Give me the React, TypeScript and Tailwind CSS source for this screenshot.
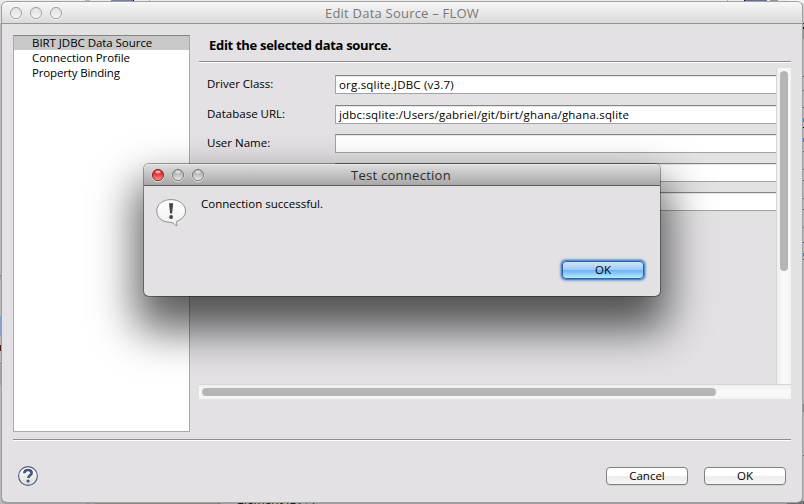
import React from "react";

const font = "font-['Open_Sans','Noto_Sans',sans-serif]";

function Light({ red = false, pale = false }: { red?: boolean; pale?: boolean }) {
  const id = red ? "light-red" : pale ? "light-pale" : "light-gray";
  return (
    <svg width="14" height="14" viewBox="0 0 14 14">
      <defs>
        <linearGradient id={id} x1="0" y1="0" x2="0" y2="1">
          <stop offset="0" stopColor={red ? "#b8222b" : pale ? "#d4d4d4" : "#9c9c9c"} />
          <stop offset="0.5" stopColor={red ? "#e9413f" : pale ? "#e9e9e9" : "#c2c2c2"} />
          <stop offset="1" stopColor={red ? "#ff9d93" : pale ? "#f8f8f8" : "#ececec"} />
        </linearGradient>
      </defs>
      <circle cx="7" cy="7.6" r="6" fill="none" stroke="#fff" strokeOpacity="0.6" />
      <circle cx="7" cy="7" r="5.6" fill={`url(#${id})`} stroke={red ? "#8d2a2e" : pale ? "#a2a2a2" : "#7c7c7c"} strokeWidth="1" />
      <ellipse cx="7" cy="4" rx="2.6" ry="1.4" fill="#fff" fillOpacity={pale ? 0.35 : 0.6} />
    </svg>
  );
}

function Field({ label, value, gap }: { label: string; value: string; gap: string }) {
  return (
    <div className={`flex h-[19px] items-center ${gap}`}>
      <span className="w-[128px] shrink-0 pb-[2px] whitespace-nowrap">{label}</span>
      <div className="flex h-[19px] flex-1 items-center overflow-hidden border border-r-0 border-[#a3a3a3] border-t-[#858585] bg-white pb-[1px] pl-[3px] shadow-[inset_0_1px_0_#e6e6e6]">
        <span className="leading-[15px] tracking-[0.19px] whitespace-nowrap">{value}</span>
      </div>
    </div>
  );
}

function PushButton({ children }: { children: string }) {
  return (
    <button className="flex h-[18px] w-[82px] items-center justify-center rounded-[4px] border border-[#7f7f7f] bg-linear-to-b from-white from-45% via-[#ededed] via-55% to-[#f6f6f6] shadow-[0_1px_0_#d0d0d0]">
      {children}
    </button>
  );
}

function Backdrop() {
  return (
    <div className="flex h-[504px] w-[804px] flex-col bg-[#c4c4c6]">
      <div className="flex h-[3px] shrink-0 bg-[#ececec]">
        <div className="ml-[85px] w-[5px] bg-[#b9b9b9]" />
        <div className="ml-[21px] w-[22px] bg-[#777fa8]" />
        <div className="w-px bg-black" />
        <div className="ml-[15px] w-px bg-[#8eb8d8]" />
        <div className="ml-[577px] w-px bg-[#8eb8d8]" />
        <div className="ml-[16px] w-px bg-black" />
        <div className="w-[22px] bg-[#626d9b]" />
        <div className="ml-[3px] w-[8px] bg-[#999]" />
        <div className="ml-[9px] flex-1 bg-[#f7f7f7]" />
      </div>
      <div className="flex h-[498px] shrink-0 justify-between">
        <div className="flex w-[3px] flex-col bg-[#bdbdc1]">
          <div className="h-[20px] bg-[#e4e4e4]" />
          <div className="mt-[252px] h-px bg-[#777]" />
          <div className="h-[4px] bg-[#a6a6aa]" />
          <div className="mt-[36px] h-[20px] bg-[#8ea6cc]" />
          <div className="mt-[9px] h-[6px] bg-[#482010]" />
          <div className="mt-[12px] h-px bg-[#777]" />
          <div className="mt-px h-[20px] bg-[#a5a5a5]" />
        </div>
        <div className="flex w-[3px] flex-col bg-[#bdbdc1]">
          <div className="h-[20px] bg-[#d0d0d0]" />
          <div className="h-px bg-[#333]" />
          <div className="mt-[3px] h-[2px] bg-[#111]" />
          <div className="h-[10px] bg-[#929292]" />
          <div className="mt-[37px] h-px bg-[#666]" />
          <div className="mt-[13px] h-px bg-[#666]" />
          <div className="mt-[16px] h-px bg-[#666]" />
          <div className="mt-[10px] h-[4px] bg-[#4c82b4]" />
          <div className="mt-[5px] h-px bg-black" />
          <div className="mt-[10px] h-[4px] bg-[#4c82b4]" />
          <div className="mt-[9px] h-px bg-[#555]" />
          <div className="mt-[17px] h-px bg-[#777]" />
          <div className="mt-[10px] h-px bg-[#555]" />
          <div className="mt-[17px] h-px bg-[#777]" />
          <div className="mt-[10px] h-px bg-[#555]" />
          <div className="mt-[17px] h-px bg-[#777]" />
          <div className="mt-[14px] h-px bg-[#555]" />
          <div className="mt-[10px] h-[3px] bg-[#4c82b4]" />
          <div className="mt-[3px] h-px bg-[#555]" />
          <div className="mt-[144px] h-[8px] bg-[#8b8b8b]" />
          <div className="mt-[43px] h-px bg-[#555]" />
        </div>
      </div>
      <div className="flex h-[3px] shrink-0 overflow-hidden bg-[#b9b9bb]">
        <div className="ml-[86px] w-[4px] bg-[#a19fa4]" />
        <div className="ml-[5px] w-[124px] bg-[#9b9b91]" />
        <div className="w-px bg-[#666]" />
        <span className="-mt-[9px] ml-[17px] w-[69px] text-[12px] leading-[15px] text-black">Element ID:</span>
        <div className="w-px bg-[#666]" />
        <span className="-mt-[9px] ml-[4px] text-[12px] leading-[15px] text-black">7</span>
        <div className="ml-auto w-[17px] bg-[#777]" />
      </div>
    </div>
  );
}

function DataSourceWindow() {
  return (
    <section className="absolute top-[2px] left-[2px] flex h-[500px] w-[800px] flex-col overflow-hidden rounded-[5px] bg-[#e3e1e4] shadow-[0_0_0_1px_#a0a0a2,0_1px_2px_#555]">
      <header className="flex h-[22px] shrink-0 items-center border-b border-[#949494] bg-linear-to-b from-[#f7f7f7] to-[#dadada] pl-[7px]">
        <div className="flex w-[54px] gap-[6px]">
          <Light pale /><Light pale /><Light pale />
        </div>
        <h1 className="ml-[262px] text-[13px] leading-[18px] tracking-[0.22px] whitespace-nowrap text-[#777]">Edit Data Source – FLOW</h1>
      </header>
      <div className="flex h-[408px] shrink-0 pt-[11px] pr-[11px] pl-[11px]">
        <nav className="h-[397px] w-[177px] shrink-0 border border-[#aaa] border-t-[#858585] bg-white">
          <div className="h-[14px] bg-[#c8c8c8] pl-[18px] leading-[14px] tracking-[-0.05px]">BIRT JDBC Data Source</div>
          <div className="h-[15px] pl-[18px] leading-[16px] tracking-[-0.05px]">Connection Profile</div>
          <div className="h-[15px] pl-[18px] leading-[16px] tracking-[-0.15px]">Property Binding</div>
        </nav>
        <main className="ml-[9px] flex w-[592px] flex-col">
          <h2 className="h-[27px] shrink-0 border-b border-[#8d8b8e] pl-[10px] text-[13px] leading-[21px] font-bold tracking-[-0.3px] whitespace-nowrap">Edit the selected data source.</h2>
          <div className="h-px shrink-0 bg-white" />
          <div className="mt-[5px] flex h-[316px] shrink-0">
            <div className="flex w-[577px] flex-col pt-[7px] pl-[8px]">
              <Field label="Driver Class:" value="org.sqlite.JDBC (v3.7)" gap="mt-0" />
              <Field label="Database URL:" value="jdbc:sqlite:/Users/gabriel/git/birt/ghana/ghana.sqlite" gap="mt-[11px]" />
              <Field label="User Name:" value="" gap="mt-[10px]" />
              <Field label="Password:" value="" gap="mt-[10px]" />
              <Field label="JNDI URL:" value="" gap="mt-[10px]" />
            </div>
            <div className="w-[15px] border-l border-[#d6d6d6] bg-linear-to-r from-[#efefef] via-[#fafafa] to-[#f4f4f4] pt-[3px] pl-[3px]">
              <div className="h-[200px] w-[8px] rounded-full bg-[#b5b5b5]" />
            </div>
          </div>
          <div className="h-[15px] shrink-0 border-t border-[#d6d6d6] bg-linear-to-b from-[#efefef] via-[#fafafa] to-[#f4f4f4] pt-[3px] pl-[3px]">
            <div className="h-[8px] w-[514px] rounded-full bg-[#b5b5b5]" />
          </div>
        </main>
      </div>
      <footer className="flex flex-1 flex-col px-[11px] pt-[7px]">
        <div className="h-[2px] border-b border-white bg-[#8d8b8e]" />
        <div className="flex items-start pt-[24px] pr-[5px] pl-[4px]">
          <svg width="22" height="22" viewBox="0 0 22 22">
            <defs>
              <linearGradient id="help" x1="0" y1="0" x2="0" y2="1">
                <stop offset="0" stopColor="#fff" />
                <stop offset="1" stopColor="#dcdcdc" />
              </linearGradient>
            </defs>
            <circle cx="11" cy="11" r="9.4" fill="url(#help)" stroke="#4b5c80" strokeWidth="1.1" />
            <path d="M7.3 8.2C7.4 5.9 9 5 11 5s3.7 1 3.7 2.9c0 2.2-3.4 2.5-3.4 5" fill="none" stroke="#43557c" strokeWidth="2.5" />
            <circle cx="11.1" cy="16" r="1.6" fill="#43557c" />
          </svg>
          <div className="mt-[2px] ml-auto flex gap-[16px]">
            <PushButton>Cancel</PushButton>
            <PushButton>OK</PushButton>
          </div>
        </div>
      </footer>
    </section>
  );
}

function TestDialog() {
  return (
    <section className="absolute top-[164px] left-[144px] flex h-[132px] w-[516px] flex-col rounded-[5px] bg-[#e3e1e4] shadow-[0_0_0_1px_rgba(0,0,0,0.35),0_26px_44px_8px_rgba(0,0,0,0.64)]">
      <header className="flex h-[22px] shrink-0 items-center rounded-t-[5px] border-b border-[#5c5c5c] bg-linear-to-b from-[#dedede] to-[#a8a8a8] pl-[7px] shadow-[inset_0_1px_0_#e8e8e8]">
        <div className="flex gap-[6px]">
          <Light red /><Light /><Light />
        </div>
        <h2 className="ml-[146px] text-[13px] leading-[18px] tracking-[0.27px] whitespace-nowrap text-[#2d2d2d]">Test connection</h2>
      </header>
      <div className="flex h-[75px] shrink-0 pt-[11px] pl-[11px]">
        <svg width="32" height="32" viewBox="0 0 32 32">
          <defs>
            <linearGradient id="bubble" x1="0" y1="0" x2="0" y2="1">
              <stop offset="0" stopColor="#fff" />
              <stop offset="1" stopColor="#f0f0f0" />
            </linearGradient>
          </defs>
          <path d="M16 2.6C7.8 2.6 1.8 7.4 1.8 14.1c0 6.4 5 10.7 12.7 11.2 2.2.1 3.4.5 4.7 1.7 1.1 1 1.9 1.8 3 1.5-.8-1-1-2.7-.4-4.3 5.2-1.8 8.7-5.4 8.7-10.1C30.5 7.4 24.3 2.6 16 2.6Z" fill="url(#bubble)" stroke="#8e8e8e" />
          <path d="M14 6.2h4.2l-1.1 10.4h-2Z" fill="#454545" />
          <circle cx="16.1" cy="20" r="1.9" fill="#454545" />
        </svg>
        <p className="ml-[14px] leading-[13px] whitespace-nowrap">Connection successful.</p>
      </div>
      <div className="flex justify-end pr-[16px]">
        <button className="flex h-[18px] w-[82px] items-center justify-center rounded-[4px] border border-[#2f62a8] bg-[linear-gradient(to_bottom,#cfe5fb_0%,#9fcbf6_48%,#6fb2f4_52%,#b4edff_100%)] shadow-[0_0_0_1px_#5287cc,0_0_2px_2px_#79a6d8]">
          OK
        </button>
      </div>
    </section>
  );
}

export default function App() {
  return (
    <div className={`relative h-[504px] w-[804px] overflow-hidden text-[11.5px] text-black ${font}`}>
      <Backdrop />
      <DataSourceWindow />
      <TestDialog />
    </div>
  );
}
